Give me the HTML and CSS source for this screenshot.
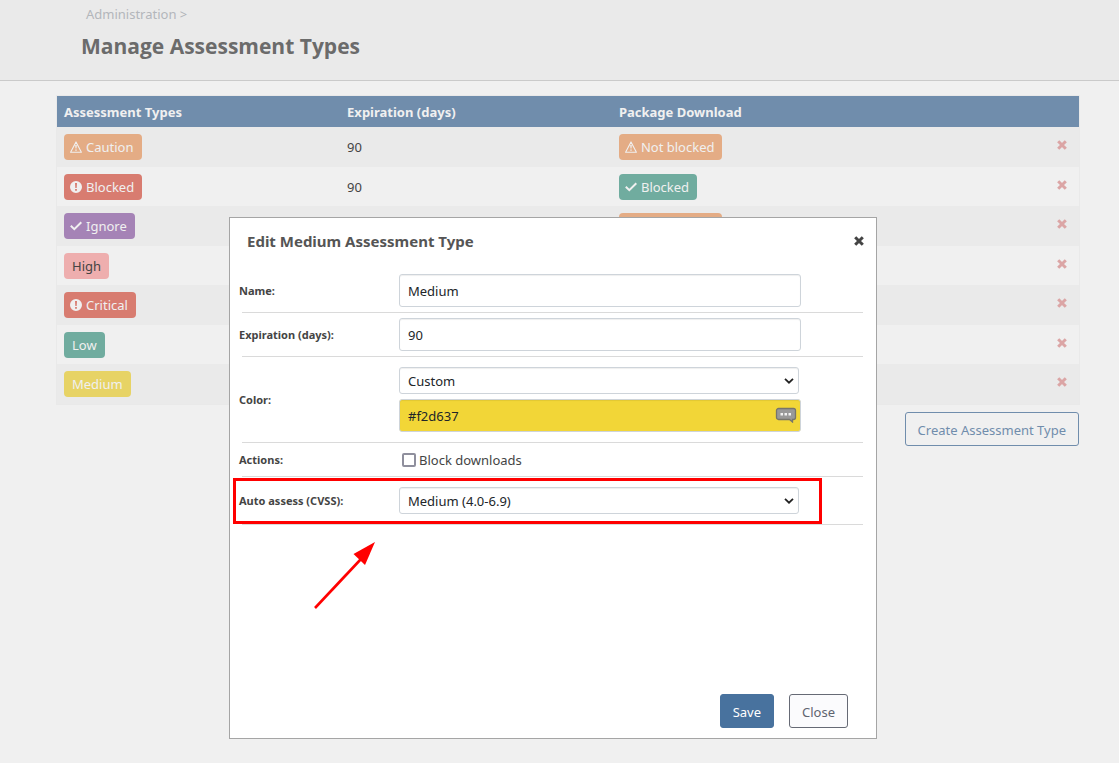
FILE: index.html
```html
<!DOCTYPE html>
<html lang="en">
<head>
<meta charset="utf-8">
<title>Manage Assessment Types</title>
<link rel="stylesheet" href="styles.css">
</head>
<body>
<svg class="sprite" aria-hidden="true">
  <symbol id="i-warn" viewBox="0 0 12 12"><path d="M6 .9 11.4 11.3H.6Z" fill="none" stroke="currentColor" stroke-width="1.1" stroke-linejoin="round"/><path d="M5.2 4h1.6L6.5 7.6h-1zM5.3 8.4h1.4v1.4H5.3z" fill="currentColor"/></symbol>
  <symbol id="i-alert" viewBox="0 0 12 12"><path fill-rule="evenodd" fill="currentColor" d="M6 0a6 6 0 1 1 0 12A6 6 0 0 1 6 0ZM5 2l.3 5.1h1.4L7 2ZM5.1 8v1.8h1.8V8Z"/></symbol>
  <symbol id="i-check" viewBox="0 0 12 12"><path d="M.8 5.8 4.3 9.2 11.3 2.2" fill="none" stroke="currentColor" stroke-width="2"/></symbol>
  <symbol id="i-x" viewBox="0 0 10 10"><path d="M1.200 1.200 8.800 8.800M8.800 1.200 1.200 8.800" stroke="currentColor" stroke-width="3"/></symbol>
</svg>
<header class="page-header">
  <nav class="crumbs"><a href="#">Administration</a> &gt;</nav>
  <h1>Manage Assessment Types</h1>
</header>
<main class="content">
  <table class="types">
    <colgroup><col class="c-type"><col class="c-exp"><col><col class="c-del"></colgroup>
    <thead><tr><th>Assessment Types</th><th>Expiration (days)</th><th>Package Download</th><th></th></tr></thead>
    <tbody>
      <tr><td><span class="badge orange"><svg><use href="#i-warn"/></svg>Caution</span></td><td class="num">90</td><td><span class="badge orange"><svg><use href="#i-warn"/></svg>Not blocked</span></td><td><button class="del" aria-label="Delete Caution"><svg><use href="#i-x"/></svg></button></td></tr>
      <tr><td><span class="badge red"><svg><use href="#i-alert"/></svg>Blocked</span></td><td class="num">90</td><td><span class="badge green"><svg><use href="#i-check"/></svg>Blocked</span></td><td><button class="del" aria-label="Delete Blocked"><svg><use href="#i-x"/></svg></button></td></tr>
      <tr><td><span class="badge purple"><svg><use href="#i-check"/></svg>Ignore</span></td><td></td><td><span class="badge orange"><svg><use href="#i-warn"/></svg>Not blocked</span></td><td><button class="del" aria-label="Delete Ignore"><svg><use href="#i-x"/></svg></button></td></tr>
      <tr><td><span class="badge pink">High</span></td><td></td><td></td><td><button class="del" aria-label="Delete High"><svg><use href="#i-x"/></svg></button></td></tr>
      <tr><td><span class="badge red"><svg><use href="#i-alert"/></svg>Critical</span></td><td></td><td></td><td><button class="del" aria-label="Delete Critical"><svg><use href="#i-x"/></svg></button></td></tr>
      <tr><td><span class="badge green">Low</span></td><td></td><td></td><td><button class="del" aria-label="Delete Low"><svg><use href="#i-x"/></svg></button></td></tr>
      <tr><td><span class="badge yellow">Medium</span></td><td></td><td></td><td><button class="del" aria-label="Delete Medium"><svg><use href="#i-x"/></svg></button></td></tr>
    </tbody>
  </table>
  <div class="actions"><button class="btn create">Create Assessment Type</button></div>
</main>

<div class="overlay">
  <section class="modal" role="dialog" aria-labelledby="dlg-title">
    <div class="modal-head">
      <h2 id="dlg-title">Edit Medium Assessment Type</h2>
      <button class="x" aria-label="Close dialog"><svg><use href="#i-x"/></svg></button>
    </div>
    <form class="form">
      <div class="row"><label for="name">Name:</label><input class="field" id="name" type="text" value="Medium"></div>
      <hr>
      <div class="row"><label for="days">Expiration (days):</label><input class="field" id="days" type="text" value="90"></div>
      <hr>
      <div class="row roomy"><label for="color">Color:</label>
        <div class="stack">
          <select class="field" id="color"><option>Custom</option></select>
          <div class="swatch"><input class="field" type="text" value="#f2d637" aria-label="Custom color">
            <svg class="bubble" viewBox="0 0 22 16"><path d="M3.500 1.500h15a2 2 0 0 1 2 2v7a2 2 0 0 1-2 2h-1v2.500l-3-2.500h-11a2 2 0 0 1-2-2v-7a2 2 0 0 1 2-2Z" fill="#999" stroke="#77756b" stroke-width="1.300"/><path d="M5.500 6h2.500v2.500H5.500zM9.500 6H12v2.500H9.500zM13.500 6H16v2.500h-2.500z" fill="#f2f2f2"/></svg>
          </div>
        </div>
      </div>
      <hr>
      <div class="row check-row"><span class="label">Actions:</span><label class="check"><input type="checkbox">Block downloads</label></div>
      <hr>
      <div class="row roomy marked"><label for="cvss">Auto assess (CVSS):</label>
        <select class="field" id="cvss"><option>Medium (4.0-6.9)</option></select>
        <div class="mark"></div>
        <svg class="arrow" viewBox="0 0 64 70"><path d="M2 67 48 18" stroke="#f00" stroke-width="2.600"/><path d="M62 1 52 24 40.500 13Z" fill="#f00"/></svg>
      </div>
      <hr>
    </form>
    <div class="modal-foot"><button class="btn save">Save</button><button class="btn close">Close</button></div>
  </section>
</div>
</body>
</html>
```
FILE: styles.css
```css
* { box-sizing: border-box; }
body {
  margin: 0;
  min-height: 100vh;
  background: #f0f0f0;
  font: 13px/20px "Noto Sans", "Open Sans", sans-serif;
  color: #444;
}
button, input, select { font: inherit; }
button { cursor: pointer; }
.sprite { display: none; }
h1, h2 { margin: 0; }

.page-header {
  height: 81px;
  padding: 4px 81px 0;
  background: #eaeaea;
  border-bottom: 1px solid #cacaca;
}
.crumbs { padding-left: 5px; color: #b0b3b8; }
.crumbs a { color: #b3b6bb; text-decoration: none; }
h1 { margin-top: 8px; font: 700 21px/28px "Open Sans", "Noto Sans", sans-serif; color: #6b6b6b; }

.content { padding: 15px 40px 0 57px; }
.types { width: 100%; border-collapse: collapse; table-layout: fixed; box-shadow: 0 0 0 1px #e9e9e9; }
.c-type { width: 27.7%; }
.c-exp { width: 26.6%; }
.c-del { width: 29px; }
th {
  height: 31px;
  padding: 0 7px;
  background: #708dac;
  color: #f0f0f0;
  text-align: left;
}
td { height: 40px; padding: 7px 7px 0; vertical-align: top; }
tbody tr:nth-child(odd) { background: #eaeaea; }
tbody tr:nth-child(even) td { height: 39px; }
.num { padding-top: 10px; }
.badge {
  display: inline-flex;
  align-items: center;
  gap: 4px;
  height: 26px;
  padding: 0 8px;
  border-radius: 4px;
  color: #f0f0f0;
  vertical-align: top;
}
.badge:has(svg) { padding-left: 6px; }
.badge svg { width: 12px; height: 12px; margin-bottom: 1px; }
.orange { background: #e4ac85; }
.red { background: #d87c70; }
.green { background: #70ac9f; }
.purple { background: #a583b6; }
.pink { background: #eeaeae; color: #444; }
.yellow { background: #e7d365; }
.del { display: block; padding: 6px 0 0; border: 0; background: none; color: #dba5a5; }
.del svg { display: block; width: 10px; height: 10px; }

.btn { height: 34px; padding: 1px 12px 0; border: 1px solid; border-radius: 3px; background: none; }
.actions { display: flex; justify-content: flex-end; padding-top: 8px; }
.create { color: #708dac; }

.overlay {
  position: fixed;
  inset: 0 13px 0 0;
  display: flex;
  justify-content: center;
  align-items: flex-start;
  padding-top: 217px;
}
.modal { width: 648px; background: #fff; border: 1px solid #a5a5a5; padding: 0 13px 10px 9px; }
.modal-head { display: flex; align-items: center; justify-content: space-between; height: 51px; padding: 0 0 6px 8px; }
h2 { font-size: 15px; line-height: 22px; color: #555; }
.x { padding: 0; margin-right: -1px; border: 0; background: none; color: #444; }
.x svg { display: block; width: 10px; height: 10px; }
.row { display: grid; grid-template-columns: 160px 402px; align-items: center; padding: 5px 0; }
.row > label:first-child, .label { font-size: 11px; font-weight: 700; }
.roomy { padding: 10px 0; }
.check-row { padding: 7px 0 6px; }
hr { height: 1px; margin: 0 0 0 3px; border: 0; background: #dadada; }
.field {
  width: 100%;
  height: 33px;
  padding: 1px 8px 0;
  border: 1px solid #ced4da;
  border-radius: 3px;
  background: #fff;
  color: #212529;
  box-shadow: inset 0 1px 1px #0001;
}
select.field {
  width: calc(100% - 2px);
  height: 27px;
  padding: 0 8px;
  appearance: none;
  background: #fff url("data:image/svg+xml,%3Csvg xmlns='http://www.w3.org/2000/svg' viewBox='0 0 10 6'%3E%3Cpath d='M1 .8 5 4.700 9 .8' fill='none' stroke='%23222' stroke-width='1.800'/%3E%3C/svg%3E") no-repeat right 4px center / 10px 6px;
}
.stack { display: grid; gap: 5px; }
.swatch { position: relative; }
.swatch .field { display: block; background: #f2d637; }
.bubble { position: absolute; right: 4px; top: 8px; width: 22px; height: 16px; }
.check { display: flex; align-items: center; gap: 3px; padding-left: 3px; }
.check input { appearance: none; width: 14px; height: 14px; margin: 0; border: 2px solid #8f8f9d; border-radius: 2px; background: #fff; }
.marked { position: relative; }
.mark { position: absolute; inset: 1px 41px 0 -6px; border: 3px solid #f00; }
.arrow { position: absolute; left: 74px; top: 64px; width: 64px; height: 70px; }
.modal-foot { display: flex; justify-content: flex-end; gap: 15px; padding: 169px 15px 0 0; }
.save { background: #48729e; border-color: #48729e; color: #fff; }
.close { background: #fbfbfd; border-color: #666a75; color: #5f6470; }
```
